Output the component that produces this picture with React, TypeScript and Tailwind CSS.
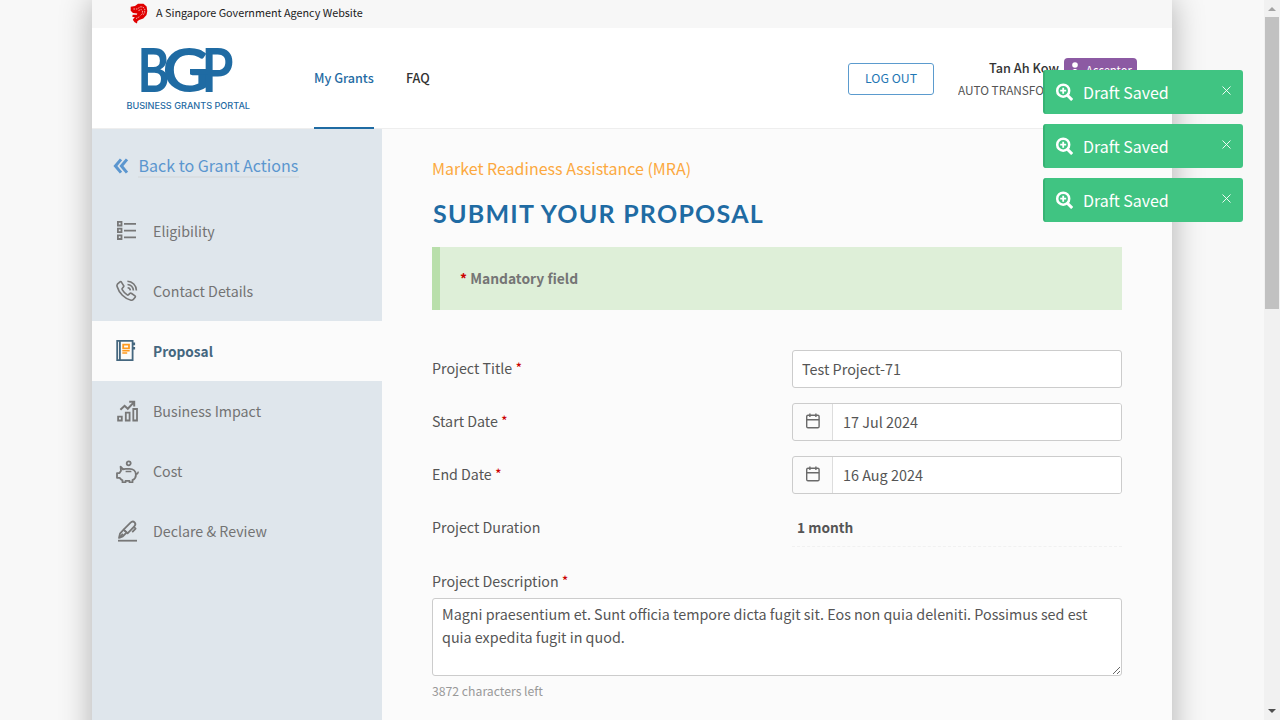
import type { ReactNode } from "react";

const iconProps = {
  width: 24,
  height: 24,
  viewBox: "0 0 24 24",
  fill: "none",
  stroke: "#777",
  strokeWidth: 1.8,
};

const ListIcon = () => (
  <svg {...iconProps}>
    <path d="M2.9 2.9h3.6v3.6H2.9zM2.9 9.6h3.6v3.6H2.9zM2.9 16.4h3.6V20H2.9z" />
    <path d="M9 4.8h12M9 11.6h12M9 18.3h12" />
  </svg>
);

const PhoneIcon = () => (
  <svg {...iconProps} strokeLinejoin="round" strokeWidth="1.65">
    <path d="M2.4 5.2 5 2.900c.5-.4 1-.3 1.400.2L8.600 6.600c.4.5.3 1-.2 1.400L7.300 9.300c-.4.4-.4.900-.1 1.400 1.200 2.100 2.900 3.900 5 5.200.5.3 1 .2 1.400-.2l1.300-1.300c.4-.4.9-.5 1.400-.1l3.700 2.600c.5.4.5.900.2 1.400l-1.900 2.200c-.6.7-1.400.9-2.300.7C9.600 19.800 4 14 2.100 7.600c-.3-.9-.3-1.700.3-2.400z" />
    <path d="M12.600 8.700a2.800 2.800 0 0 1 2.700 2.700M12.500 5.500a6 6 0 0 1 5.900 5.900M12.400 2.300a9.200 9.200 0 0 1 9 9.100" />
  </svg>
);

const BookIcon = () => (
  <svg {...iconProps} stroke="#45677f">
    <path d="M2.200 1.900h15.400v19.200H2.200z" />
    <path d="M4.900 1.900v19.200" />
    <path d="M19 3.600v2.600M19 8v2.600" strokeWidth="2.200" />
    <g stroke="#ff9a1f">
      <path d="M8.200 5.700h5.800v3.700H8.200z" />
      <path d="M7.300 11.800h7.400M7.300 14h4.900" strokeWidth="1.600" />
    </g>
  </svg>
);

const ChartIcon = () => (
  <svg {...iconProps}>
    <path d="M3.100 17.700h3.700v3.800H3.100zM10.800 13.700h3.800v7.800h-3.800zM18.300 10h3.700v11.500h-3.700z" />
    <path d="m5.400 10.800 4.200-4 3.200 3 6.200-6.700M14.200 2.800h5v4.800" strokeWidth="2" />
  </svg>
);

const PiggyIcon = () => (
  <svg {...iconProps} strokeLinejoin="round">
    <circle cx="13.700" cy="4.300" r="2" />
    <path d="M7.800 9.900 5.600 7.600l.4 4.200-1.500 2.300H2v4.700h2.600c.8 1.300 1.700 2 2.900 2.500v2h3v-1.500h4v1.500h3v-2.200c2-1 3.400-2.700 3.400-5.200 0-3.700-2.700-6-6.400-6h-3.700c-1.200 0-2 0-3 .5z" />
    <path d="M20.900 15c1.500 0 2.300-.8 2.200-2.400M10.600 12.500h5.800" strokeWidth="1.600" />
  </svg>
);

const PenIcon = () => (
  <svg {...iconProps} strokeLinejoin="round">
    <path d="M3 21.700h19" />
    <path d="m4 18.900 1-4.300 3.600-4 3 2.900-3.800 3.800z" />
    <path d="m8.600 10.600 6.700-6.800c1.500-1.400 3.300-1.400 4.300-.4s1 2.500-.3 3.900l-6.700 7-4-3.700M18.600 7.600l2 2-3.400 3.600M4.500 18.500l3.500-3.600" />
  </svg>
);

const CalendarIcon = () => (
  <svg width="16" height="16" viewBox="0 0 16 16" fill="none" stroke="#6a6a6a" strokeWidth="1.400">
    <rect x="1.700" y="2.200" width="12.400" height="12.600" rx="1.300" />
    <path d="M1.700 6.700h12.400M4.900.5v3.600M10.900.5v3.600" />
  </svg>
);

const LionIcon = () => (
  <svg className="-mt-[2px] shrink-0" width="18" height="21" viewBox="0 0 18 21">
    <path
      fill="#e00000"
      d="M.7 3.700 5 3 8 .8h5.500L16.600 3.600l.7 4.400-.8 4-3.200 3.600-4.200 1.300-1.700 1.300-.4 2.300-2.400-1.200-1.800-2.600 1.200-1.600.9-1.200-2.500.2.200-2.300H7l.2-1.400L3 9.900.7 7.800z"
    />
    <path
      fill="none"
      stroke="#f7f7f7"
      strokeWidth=".7"
      strokeDasharray="1.600 .9"
      d="M3.400 6h3.800l3-2.100h2.700l1.800 2.400v3.200l-1.800 2.600M8.500 7.600l2.700-1.200 1.300 1.700-.2 2.600-2 2M6 15.600l3.300-1.800"
    />
  </svg>
);

const Logo = () => (
  <svg width="126" height="66" viewBox="0 0 126 66" fill="#1f6ba3">
    <g fontFamily="Lato, sans-serif" fontSize="60.500" fontWeight="700">
      <text x="12.500" y="46.800" textLength="32" lengthAdjust="spacingAndGlyphs">B</text>
      <text x="37.500" y="46.800" textLength="47" lengthAdjust="spacingAndGlyphs">G</text>
      <text x="76.500" y="46.800" textLength="32" lengthAdjust="spacingAndGlyphs">P</text>
    </g>
    <rect x="65" y="24" width="18" height="5.500" />
    <text
      x="1.500"
      y="63.800"
      fontFamily="Inter, sans-serif"
      fontSize="8.800"
      fontWeight="500"
      textLength="123.500"
      lengthAdjust="spacingAndGlyphs"
    >
      BUSINESS GRANTS PORTAL
    </text>
  </svg>
);

const ZoomIcon = () => (
  <svg width="18" height="18" viewBox="0 0 18 18" fill="none" stroke="#fff">
    <circle cx="8.200" cy="7.700" r="6" strokeWidth="2.500" />
    <path d="m12.400 12.200 4.800 4.800" strokeWidth="3" />
    <path d="M8.200 4.700v6M5.200 7.700h6" strokeWidth="1.800" />
  </svg>
);

const NAV: { label: string; icon: ReactNode; active?: boolean }[] = [
  { label: "Eligibility", icon: <ListIcon /> },
  { label: "Contact Details", icon: <PhoneIcon /> },
  { label: "Proposal", icon: <BookIcon />, active: true },
  { label: "Business Impact", icon: <ChartIcon /> },
  { label: "Cost", icon: <PiggyIcon /> },
  { label: "Declare & Review", icon: <PenIcon /> },
];

const Star = () => <span className="text-[#c00]">*</span>;

function Toast() {
  return (
    <div className="flex h-11 w-[200px] items-center rounded-[3px] border-l-2 border-[#36b374] bg-[#40c482] pl-[10px] text-white">
      <ZoomIcon />
      <span className="ml-[10px] pb-px text-[16px] leading-6 tracking-[-0.050px]">Draft Saved</span>
      <svg className="mb-[4px] ml-auto mr-[12px]" width="9" height="9" viewBox="0 0 9 9" stroke="#fff" strokeWidth=".9">
        <path d="m.5.5 8 8M8.500.5l-8 8" />
      </svg>
    </div>
  );
}

function DateField({ label, value }: { label: string; value: string }) {
  return (
    <div className="mb-[15px] flex h-[38px] items-center">
      <label className="w-[360px] pb-[2px]">
        {label} <Star />
      </label>
      <div className="flex h-[38px] w-[330px] overflow-hidden rounded-[3px] border border-[#ccc]">
        <span className="flex w-10 justify-center border-r border-[#ddd] pt-[9px]">
          <CalendarIcon />
        </span>
        <input className="min-w-0 flex-1 bg-white px-[10px] pb-px text-[14.400px] outline-none" defaultValue={value} />
      </div>
    </div>
  );
}

export default function App() {
  return (
    <div className="relative flex h-[720px] w-[1280px] overflow-hidden bg-[#f8f8f8] font-['Noto_Sans_CJK_SC','Noto_Sans',sans-serif] text-[14.240px] leading-5 text-[#555]">
      <div className="flex h-[780px] flex-1 justify-center">
        <div className="flex w-[1080px] flex-col bg-[#fbfbfb] shadow-[0_0_30px_rgba(0,0,0,0.3)]">
          <div className="flex h-7 shrink-0 items-center bg-[#f7f7f7] pl-[38px] text-[10.800px] text-[#222]">
            <LionIcon />
            <span className="ml-[8px] pb-[4px]">A Singapore Government Agency Website</span>
          </div>

          <header className="flex h-[101px] shrink-0 items-stretch border-b border-[#eee] bg-white">
            <div className="w-[222px] pl-[33px] pt-[17px]">
              <Logo />
            </div>
            <nav className="flex items-stretch gap-8 text-[12.600px] font-medium text-[#333]">
              <a className="-mb-px w-[60px] whitespace-nowrap border-b-2 border-[#1f6ba3] pt-[40px] text-[#1f6ba3]">My Grants</a>
              <a className="pt-[40px]">FAQ</a>
            </nav>
            <div className="ml-auto flex pr-[35px]">
              <button className="mt-[34.500px] h-[32px] w-[86px] rounded-[3px] border border-[#5b9bce] pb-px text-[12.300px] text-[#1f77b4]">
                LOG OUT
              </button>
              <div className="ml-6 mt-[30px] w-[179px]">
                <div className="flex h-5 items-center justify-end gap-[5px]">
                  <span className="text-[12.700px] font-medium text-[#333]">Tan Ah Kow</span>
                  <span className="mt-[2px] flex h-[22px] w-[73px] items-center rounded-[4px] bg-[#8c5aa3] pl-[7px] text-[11.200px] text-white">
                    <svg width="9" height="14" viewBox="0 0 9 14" fill="#fff">
                      <circle cx="4" cy="3" r="2.800" />
                      <path d="M0 13c0-8 8-8 8 0z" />
                    </svg>
                    <span className="ml-[6px] pt-px">Acceptor</span>
                  </span>
                </div>
                <div className="mt-[2px] w-[172px] truncate text-[11.800px]">AUTO TRANSFORMATION</div>
              </div>
            </div>
          </header>

          <div className="flex min-h-0 flex-1">
            <aside className="w-[290px] shrink-0 bg-[#dfe6ec]">
              <div className="flex h-[72px] items-start pl-[21px] pt-[25px] text-[16.050px] text-[#5b96cf]">
                <svg className="mt-[4px]" width="16" height="16" viewBox="0 0 16 16" fill="none" stroke="#5b96cf" strokeWidth="3">
                  <path d="M8 1.400 2.400 8 8 14.600M14 1.400 8.400 8l5.600 6.600" />
                </svg>
                <a className="ml-[9px] w-[161px] whitespace-nowrap border-b-2 border-[#d9dee2] pl-[.5px] leading-[22px]">
                  Back to Grant Actions
                </a>
              </div>
              {NAV.map((item) => (
                <div
                  key={item.label}
                  className={
                    item.active
                      ? "flex h-[60px] items-center bg-[#fbfbfb] pl-[23px] text-[13.700px] font-bold text-[#45677f]"
                      : "flex h-[60px] items-center pl-[23px] text-[#737373]"
                  }
                >
                  {item.icon}
                  <span className="ml-[14px]">{item.label}</span>
                </div>
              ))}
            </aside>

            <main className="flex-1 pl-[50px] pr-[50px] pt-[29px]">
              <p className="text-[16px] text-[#fba93f]">Market Readiness Assistance (MRA)</p>
              <h1 className="mt-[19px] whitespace-nowrap pl-px font-[Lato] text-[25px] font-bold leading-[32px] tracking-[1.250px] text-[#1f6ba3]">
                SUBMIT YOUR PROPOSAL
              </h1>
              <div className="mt-[18px] flex h-[63px] items-center border-l-8 border-[#b9dfab] bg-[#deefd8] pb-[2px] pl-5 text-[13.850px] font-bold text-[#757575]">
                <span>
                  <Star /> Mandatory field
                </span>
              </div>

              <div className="mb-[15px] mt-[40px] flex h-[38px] items-center">
                <label className="w-[360px] pb-[2px]">
                  Project Title <Star />
                </label>
                <input
                  className="h-[38px] w-[330px] rounded-[3px] border border-[#ccc] bg-white px-[9px] pb-px text-[14.400px] outline-none"
                  defaultValue="Test Project-71"
                />
              </div>
              <DateField label="Start Date" value="17 Jul 2024" />
              <DateField label="End Date" value="16 Aug 2024" />
              <div className="flex h-[38px] items-center">
                <span className="w-[360px] pb-[2px]">Project Duration</span>
                <span className="h-[38px] flex-1 border-b border-dashed border-[#f1f1f1] pl-[5px] pt-2 text-[13.700px] font-bold">1 month</span>
              </div>
              <label className="mt-[24px] block">
                Project Description <Star />
              </label>
              <textarea
                className="mt-[7px] block h-[78px] w-full rounded-[3px] border border-[#ccc] bg-white px-[9px] py-[3px] text-[14.330px] leading-[23px] outline-none"
                defaultValue="Magni praesentium et. Sunt officia tempore dicta fugit sit. Eos non quia deleniti. Possimus sed est quia expedita fugit in quod."
              />
              <p className="mt-[5px] text-[12.230px] text-[#999]">3872 characters left</p>
            </main>
          </div>
        </div>
      </div>

      <div className="z-10 flex w-4 shrink-0 flex-col items-center justify-between bg-[#f1f1f1]">
        <svg width="16" height="17" viewBox="0 0 16 17" fill="#a3a3a3">
          <path d="M4 11h8L8 7z" />
        </svg>
        <div className="mb-auto h-[292px] w-[14px] bg-[#c1c1c1]" />
        <svg width="16" height="17" viewBox="0 0 16 17" fill="#505050">
          <path d="M4 6h8l-4 4z" />
        </svg>
      </div>

      <div className="absolute right-[37px] top-[70px] z-20 flex flex-col gap-[10px]">
        <Toast />
        <Toast />
        <Toast />
      </div>
    </div>
  );
}
